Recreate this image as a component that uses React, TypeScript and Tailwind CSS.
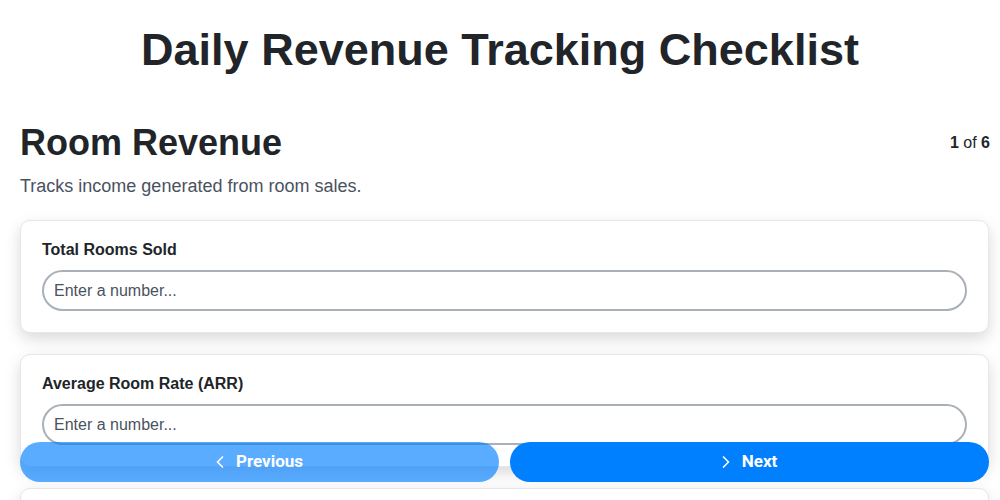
import React, { useState } from 'react';
import { ChevronLeft, ChevronRight } from 'lucide-react';

interface Field {
    id: string;
    label: string;
}

const fields: Field[] = [
    { id: 'rooms', label: 'Total Rooms Sold' },
    { id: 'arr', label: 'Average Room Rate (ARR)' },
    { id: 'revpar', label: 'Revenue Per Available Room (RevPAR)' },
];

const App: React.FC = () => {
    const [values, setValues] = useState<Record<string, string>>({});

    return (
        <div className="min-h-screen bg-white font-['Liberation_Sans',Arial,sans-serif] text-[#212529]">
            <h1 className="pt-[23px] text-center text-[45px] font-bold leading-[54px]">
                Daily Revenue Tracking Checklist
            </h1>

            <main className="pl-5 pr-[10px] pt-[44px] pb-24">
                <div className="flex items-center justify-between">
                    <h2 className="text-[36px] font-bold leading-[44px]">Room Revenue</h2>
                    <span className="text-base">
                        <b>1</b> of <b>6</b>
                    </span>
                </div>
                <p className="mt-[8px] text-lg leading-[27px] text-[#4a5260]">
                    Tracks income generated from room sales.
                </p>

                <div className="mt-[20px] space-y-[21px]">
                    {fields.map((f) => (
                        <div
                            key={f.id}
                            className="mr-px rounded-[10px] border border-[#e6e6ec] bg-white px-[21px] pt-[19px] pb-[21px] shadow-[0_6px_16px_rgba(0,0,0,0.15)]"
                        >
                            <label htmlFor={f.id} className="block text-base font-bold leading-[19px]">
                                {f.label}
                            </label>
                            <input
                                id={f.id}
                                type="text"
                                placeholder="Enter a number..."
                                value={values[f.id] ?? ''}
                                onChange={(e) => setValues({ ...values, [f.id]: e.target.value })}
                                className="mt-[11px] block h-[41px] w-full rounded-full border-2 border-[#a9b0b8] px-[10px] text-base text-[#212529] outline-none placeholder:text-[#4a5260]"
                            />
                        </div>
                    ))}
                </div>
            </main>

            {/* navigation */}
            <div className="fixed inset-x-0 bottom-[18px] flex gap-[11px] pl-5 pr-[11px] font-['Roboto',sans-serif]">
                <button className="flex h-10 flex-1 items-center justify-center gap-1.5 rounded-full bg-[#0080ff] pr-[6px] text-[17px] font-bold text-white opacity-65">
                    <ChevronLeft size={20} strokeWidth={2} />
                    Previous
                </button>
                <button className="flex h-10 flex-1 items-center justify-center gap-1.5 rounded-full bg-[#0080ff] pr-[6px] text-[17px] font-bold text-white">
                    <ChevronRight size={20} strokeWidth={2} />
                    Next
                </button>
            </div>
        </div>
    );
};

export default App;
